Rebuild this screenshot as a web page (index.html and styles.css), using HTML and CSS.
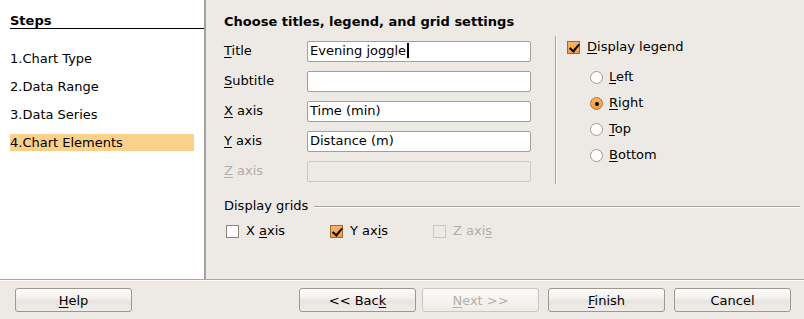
FILE: index.html
```
<!DOCTYPE html>
<html lang="en">
<head>
    <meta charset="UTF-8">
    <title>Chart Wizard</title>
    <link rel="stylesheet" href="styles.css">
</head>
<body>
    <div class="wizard">
        <div class="main">
            <!-- Roadmap -->
            <div class="steps">
                <div class="steps-title">Steps</div>
                <div class="step">1.Chart Type</div>
                <div class="step">2.Data Range</div>
                <div class="step">3.Data Series</div>
                <div class="step active">4.Chart Elements</div>
            </div>

            <!-- Page -->
            <div class="page">
                <div class="upper">
                    <div class="fields">
                        <div class="page-title">Choose titles, legend, and grid settings</div>
                        <div class="field-row">
                            <label><u>T</u>itle</label>
                            <div class="input">Evening joggle<span class="caret"></span></div>
                        </div>
                        <div class="field-row">
                            <label><u>S</u>ubtitle</label>
                            <div class="input"></div>
                        </div>
                        <div class="field-row">
                            <label><u>X</u> axis</label>
                            <div class="input">Time (min)</div>
                        </div>
                        <div class="field-row">
                            <label><u>Y</u> axis</label>
                            <div class="input">Distance (m)</div>
                        </div>
                        <div class="field-row disabled">
                            <label><u>Z</u> axis</label>
                            <div class="input"></div>
                        </div>
                    </div>

                    <div class="vsep"></div>

                    <div class="legend">
                        <div class="check-row">
                            <span class="checkbox checked"></span>
                            <span><u>D</u>isplay legend</span>
                        </div>
                        <div class="radios">
                            <div class="radio-row"><span class="radio"></span><span><u>L</u>eft</span></div>
                            <div class="radio-row"><span class="radio checked"></span><span><u>R</u>ight</span></div>
                            <div class="radio-row"><span class="radio"></span><span><u>T</u>op</span></div>
                            <div class="radio-row"><span class="radio"></span><span><u>B</u>ottom</span></div>
                        </div>
                    </div>
                </div>

                <!-- Display grids -->
                <div class="group-title">
                    <span>Display grids</span>
                    <div class="hline"></div>
                </div>
                <div class="grid-row">
                    <div class="check-row grid-x"><span class="checkbox"></span><span>X <u>a</u>xis</span></div>
                    <div class="check-row grid-y"><span class="checkbox checked"></span><span>Y ax<u>i</u>s</span></div>
                    <div class="check-row disabled"><span class="checkbox"></span><span>Z axi<u>s</u></span></div>
                </div>
            </div>
        </div>

        <div class="footer">
            <button class="btn"><u>H</u>elp</button>
            <div class="nav">
                <button class="btn">&lt;&lt; Bac<u>k</u></button>
                <button class="btn next" disabled><u>N</u>ext &gt;&gt;</button>
                <button class="btn finish"><u>F</u>inish</button>
                <button class="btn finish">Cancel</button>
            </div>
        </div>
    </div>
</body>
</html>
```

FILE: styles.css
```
body {
    margin: 0;
    background-color: #edeae6;
    font-family: "DejaVu Sans", sans-serif;
    font-size: 13px;
    color: #000;
}
u {
    text-decoration-thickness: 1px;
    text-underline-offset: 2px;
}
.wizard {
    width: 804px;
    height: 319px;
    display: flex;
    flex-direction: column;
}
.main {
    height: 279px;
    display: flex;
    border-bottom: 1px solid #a9a6a1;
    box-shadow: 0 1px 0 #fbfaf9;
}

/* Roadmap on the left */
.steps {
    width: 204px;
    background-color: #fff;
    border-right: 2px solid #a5a29e;
    padding-top: 14px;
}
.steps-title {
    margin-left: 10px;
    line-height: 14px;
    font-weight: bold;
    border-bottom: 1px solid #000;
    margin-bottom: 21px;
}
.step {
    margin-left: 10px;
    width: 184px;
    line-height: 17px;
    margin-bottom: 11px;
}
.step.active {
    background-color: #fad08b;
}

/* Page */
.page {
    flex: 1;
    padding-left: 18px;
}
.upper {
    display: flex;
    height: 184px;
}
.fields {
    width: 307px;
    padding-top: 13px;
}
.page-title {
    font-weight: bold;
    line-height: 17px;
    margin-bottom: 11px;
}
.field-row {
    display: flex;
    height: 21px;
    margin-bottom: 9px;
}
.field-row label {
    width: 83px;
    line-height: 19px;
}
.input {
    width: 224px;
    height: 21px;
    box-sizing: border-box;
    background-color: #fff;
    border: 1px solid #a89d90;
    border-radius: 2px;
    padding: 0 2px 2px 2px;
    line-height: 17px;
    white-space: nowrap;
}
.caret {
    display: inline-block;
    width: 2px;
    height: 15px;
    background-color: #000;
    vertical-align: -3px;
    margin-left: 1px;
}
.field-row.disabled label {
    color: #b3aea7;
}
.field-row.disabled .input {
    background-color: #edeae6;
    border-color: #cdc7bf;
}
.vsep {
    width: 1px;
    margin-top: 36px;
    margin-left: 24px;
    background-color: #a9a59f;
    box-shadow: 1px 0 0 #fbfaf9;
}

/* Legend column */
.legend {
    margin-left: 11px;
    padding-top: 41px;
}
.check-row {
    display: flex;
    align-items: center;
    height: 13px;
    line-height: 15px;
}
.check-row span + span {
    margin-left: 7px;
    margin-top: -2px;
}
.checkbox {
    width: 13px;
    height: 13px;
    box-sizing: border-box;
    border: 1px solid #8c847b;
    background-color: #fff;
    position: relative;
}
.checkbox.checked {
    border-color: #a6672b;
    background: linear-gradient(#f9b46a, #f29c40);
}
.checkbox.checked::after {
    content: "";
    position: absolute;
    left: 2px;
    top: 0px;
    width: 4px;
    height: 8px;
    border-right: 2px solid #000;
    border-bottom: 2px solid #000;
    transform: rotate(40deg) translate(1px, -1px);
}
.check-row.disabled {
    color: #b3aea7;
}
.check-row.disabled .checkbox {
    border-color: #cdc7bf;
    background-color: #edeae6;
}
.radios {
    margin-left: 23px;
    margin-top: 17px;
}
.radio-row {
    display: flex;
    align-items: center;
    height: 13px;
    line-height: 15px;
    margin-bottom: 13px;
}
.radio-row span + span {
    margin-left: 6px;
    margin-top: -3px;
}
.radio {
    width: 13px;
    height: 13px;
    box-sizing: border-box;
    border: 1px solid #a39a90;
    border-radius: 50%;
    background-color: #fff;
    position: relative;
}
.radio.checked {
    border-color: #b1733a;
    background: linear-gradient(#f9b46a, #f29c40);
}
.radio.checked::after {
    content: "";
    position: absolute;
    left: 3.5px;
    top: 3.5px;
    width: 4px;
    height: 4px;
    border-radius: 50%;
    background-color: #000;
}

/* Display grids */
.group-title {
    display: flex;
    align-items: center;
    margin-top: 13px;
    line-height: 17px;
}
.hline {
    flex: 1;
    height: 1px;
    margin: 1px 4px 0 6px;
    background-color: #a9a59f;
    box-shadow: 0 1px 0 #fbfaf9;
}
.grid-row {
    display: flex;
    margin-top: 11px;
    padding-left: 2px;
}
.grid-x {
    width: 104px;
}
.grid-y {
    width: 103px;
}

/* Buttons */
.footer {
    display: flex;
    justify-content: space-between;
    padding: 8px 13px 0 15px;
}
.nav {
    display: flex;
}
.btn {
    width: 117px;
    height: 24px;
    font-family: "DejaVu Sans", sans-serif;
    font-size: 13px;
    color: #000;
    border: 1px solid #9d978f;
    border-radius: 3px;
    background: linear-gradient(#fefefe 0%, #f3f1ee 40%, #e8e5e0 55%, #efece8 100%);
    padding: 0;
}
.btn.next {
    margin-left: 6px;
    color: #b5b0a9;
    border-color: #cbc6bf;
    background: linear-gradient(#fbfaf9, #efece8);
}
.btn.finish {
    margin-left: 9px;
}
```
